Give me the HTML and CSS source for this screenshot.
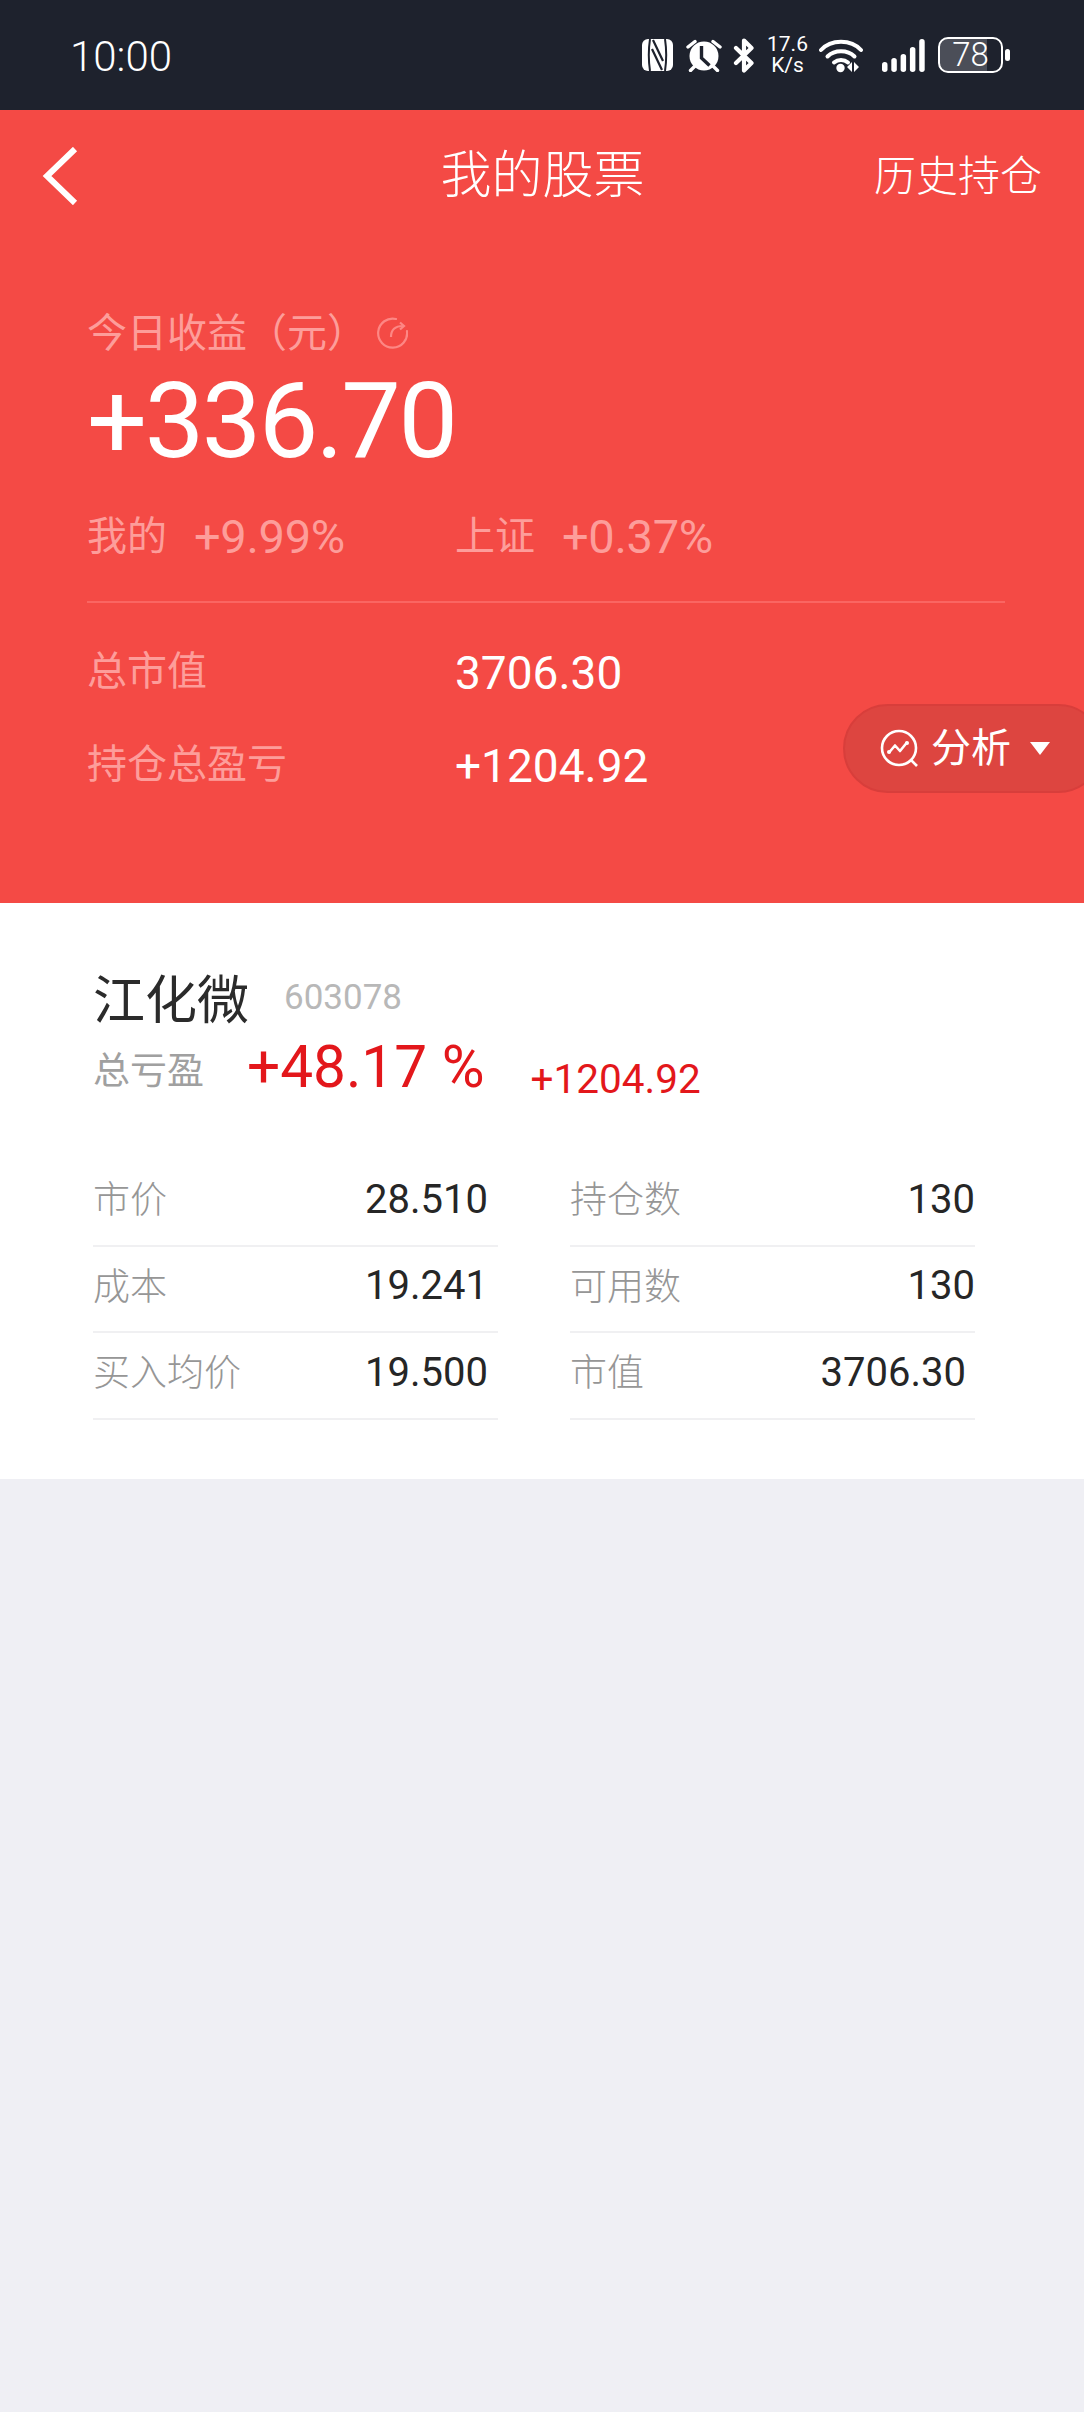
FILE: index.html
```html
<!DOCTYPE html>
<html lang="zh-CN">
<head>
<meta charset="utf-8">
<title>我的股票</title>
<link rel="stylesheet" href="styles.css">
</head>
<body>
<div class="page">
  <div class="status">
    <span class="time">10:00</span>
    <div class="status-icons">
      <svg class="ic-nfc" width="31" height="32" viewBox="0 0 31 32"><rect width="31" height="32" rx="6" fill="#fff"/><path d="M8 0c-1.500 10-1.500 22 0 32M23 0c1.500 10 1.500 22 0 32" stroke="#1e222d" stroke-width="2" fill="none"/><path d="M11 1 21 22M10 10l10 21" stroke="#1e222d" stroke-width="2.200" fill="none"/></svg>
      <svg class="ic-alarm" width="36" height="33" viewBox="0 0 36 33"><circle cx="18" cy="17" r="14.500" fill="#fff"/><path d="M15.500 7v12l8 7.500" stroke="#1e222d" stroke-width="3.400" fill="none"/><path d="M2 8 9 2.500M34 8 27 2.500M4.500 31.500l4-4M31.500 31.500l-4-4" stroke="#fff" stroke-width="3.400" stroke-linecap="round"/></svg>
      <svg class="ic-bt" width="22" height="35" viewBox="0 0 22 35"><path d="M3 10 18.500 25 11 32.500V2.500L18.500 10 3 25" stroke="#fff" stroke-width="4.200" fill="none" stroke-linejoin="round" stroke-linecap="round"/></svg>
      <div class="speed"><span>17.6</span><span>K/s</span></div>
      <svg class="ic-wifi" width="44" height="35" viewBox="0 0 44 35"><path d="M2 12C12 1 32 1 42 12" stroke="#fff" stroke-width="4" fill="none" stroke-linecap="round"/><path d="M8.500 18.500c7-7 20-7 27 0" stroke="#fff" stroke-width="4" fill="none" stroke-linecap="round"/><path d="M15 24.500c4-3.500 10-3.500 14 0" stroke="#fff" stroke-width="4" fill="none" stroke-linecap="round"/><circle cx="21.500" cy="30" r="4.200" fill="#fff"/><path d="M33 24v10l-5-5zM35 24v10l5-5z" fill="#fff"/></svg>
      <svg class="ic-signal" width="43" height="33" viewBox="0 0 43 33"><rect x="0" y="23" width="5.500" height="10" rx="2.700" fill="#fff"/><rect x="9.300" y="19" width="5.500" height="14" rx="2.700" fill="#fff"/><rect x="18.600" y="15" width="5.500" height="18" rx="2.700" fill="#fff"/><rect x="27.900" y="8" width="5.500" height="25" rx="2.700" fill="#fff"/><rect x="37.200" y="0" width="5.500" height="33" rx="2.700" fill="#fff"/></svg>
      <div class="battery"><div class="battery-body">78</div><span class="battery-tip"></span></div>
    </div>
  </div>
  <section class="red">
    <header class="nav">
      <svg class="back" width="36" height="58" viewBox="0 0 36 58"><path d="M33 2 5 29l28 27" stroke="#fff" stroke-width="6" fill="none"/></svg>
      <h1 class="title">我的股票</h1>
      <span class="history">历史持仓</span>
    </header>
    <div class="hero">
      <div class="today">
        <span class="today-text">今日收益（元）</span>
        <svg class="refresh" width="32" height="32" viewBox="0 0 32 32"><path d="M20 2A14.500 14.500 0 1 0 31 14" stroke="#fd8784" stroke-width="2.200" fill="none" stroke-linecap="round"/><path d="M15 20C15 13 19 9 27 9" stroke="#fd8784" stroke-width="2.200" fill="none"/><path d="M24 5.500 28 9l-4 3.500" stroke="#fd8784" stroke-width="2.200" fill="none"/></svg>
      </div>
      <div class="amount">+336.70</div>
      <div class="compare">
        <div class="cell"><span>我的</span><span class="pct">+9.99%</span></div>
        <div class="cell"><span>上证</span><span class="pct">+0.37%</span></div>
      </div>
      <div class="divider"></div>
      <div class="stat first"><span class="stat-label">总市值</span><span class="stat-value">3706.30</span></div>
      <div class="stat"><span class="stat-label">持仓总盈亏</span><span class="stat-value">+1204.92</span></div>
    </div>
    <div class="pill">
      <svg width="40" height="40" viewBox="0 0 40 40"><circle cx="19" cy="19" r="17" stroke="#fff" stroke-width="2.600" fill="none"/><path d="M9.500 23 15 16.500l5 5.500 6.500-8" stroke="#fff" stroke-width="2.600" fill="none" stroke-linejoin="round" stroke-linecap="round"/><circle cx="9" cy="23" r="2" fill="#fff"/><circle cx="27" cy="14" r="2" fill="#fff"/><path d="M31 31l6 6" stroke="#fff" stroke-width="2.600"/></svg>
      <span class="pill-text">分析</span>
      <i class="caret"></i>
    </div>
  </section>
  <section class="card">
    <div class="stock-head"><span class="name">江化微</span><span class="code">603078</span></div>
    <div class="gain"><span class="gain-label">总亏盈</span><span class="gain-pct">+48.17 %</span><span class="gain-val">+1204.92</span></div>
    <div class="table">
      <div class="row"><span class="k">市价</span><span class="v">28.510</span></div>
      <div class="row"><span class="k">持仓数</span><span class="v">130</span></div>
      <div class="row"><span class="k">成本</span><span class="v">19.241</span></div>
      <div class="row"><span class="k">可用数</span><span class="v">130</span></div>
      <div class="row"><span class="k">买入均价</span><span class="v">19.500</span></div>
      <div class="row"><span class="k">市值</span><span class="v wide">3706.30</span></div>
    </div>
  </section>
</div>
</body>
</html>
```
FILE: styles.css
```css
* { box-sizing: border-box; }
html, body { margin: 0; padding: 0; }
body {
  background: #efeff4;
  font-family: Roboto, "Noto Sans CJK SC", sans-serif;
  font-weight: 300;
}
.page { width: 1084px; height: 2412px; overflow: hidden; }

.status {
  height: 110px;
  background: #1e222d;
  color: #fff;
  display: flex;
  align-items: center;
  justify-content: space-between;
  padding: 0 74px 0 70px;
}
.time { font-size: 42px; line-height: 1; font-weight: 300; padding-top: 4px; }
.status-icons { display: flex; align-items: center; }
.status-icons svg { display: block; flex: none; }
.ic-alarm { margin-left: 13px; }
.ic-bt { margin-left: 11px; }
.speed {
  margin-left: 12px;
  width: 41px;
  display: flex;
  flex-direction: column;
  align-items: center;
  font-size: 21px;
  line-height: 21px;
  font-weight: 400;
}
.ic-wifi { margin-left: 11px; }
.ic-signal { margin-left: 19px; }
.battery { margin-left: 13px; display: flex; align-items: center; gap: 2px; }
.battery-body {
  width: 65px;
  height: 36px;
  border: 2px solid #fff;
  border-radius: 10px;
  background: linear-gradient(90deg, #4b4e58 0 77%, transparent 77%);
  text-align: center;
  font-size: 33px;
  line-height: 32px;
  font-weight: 300;
}
.battery-tip { width: 5px; height: 12px; background: #fff; border-radius: 3px; }

.red { position: relative; height: 793px; background: #f44a45; color: #fff; }
.nav {
  height: 132px;
  display: flex;
  align-items: center;
  justify-content: space-between;
  padding: 0 42px;
  position: relative;
}
.back { display: block; }
.title {
  position: absolute;
  left: 0;
  right: 0;
  margin: 0;
  text-align: center;
  font-size: 51px;
  line-height: 60px;
  font-weight: 300;
  text-indent: 1px;
}
.history { font-size: 42px; line-height: 60px; padding-top: 2px; }

.hero { padding: 66px 79px 0 87px; }
.today {
  display: flex;
  align-items: center;
  height: 50px;
  font-size: 40px;
  color: #fd9d9a;
  font-weight: 400;
}
.today-text { padding-bottom: 6px; }
.refresh { margin-left: 9px; }
.amount {
  margin-top: 13px;
  font-size: 106px;
  line-height: 100px;
  font-weight: 400;
  letter-spacing: -2.500px;
}
.compare { margin-top: 41px; display: grid; grid-template-columns: 368px 1fr; color: #fd9d9a; font-size: 40px; line-height: 50px; font-weight: 400; }
.cell { display: flex; gap: 27px; }
.pct { font-size: 47px; font-weight: 400; letter-spacing: -0.300px; }
.divider { margin-top: 39px; height: 2px; background: #fa6662; }
.stat { display: grid; grid-template-columns: 368px 1fr; margin-top: 43px; height: 50px; line-height: 50px; }
.stat.first { margin-top: 44px; }
.stat-label { font-size: 40px; color: #fd9d9a; font-weight: 400; }
.stat-value { font-size: 46px; font-weight: 400; line-height: 52px; }

.pill {
  position: absolute;
  left: 843px;
  top: 594px;
  width: 260px;
  height: 89px;
  border: 2px solid #d83e3b;
  border-radius: 45px;
  background: #dd4540;
  display: flex;
  align-items: center;
  padding-left: 35px;
  font-size: 40px;
  font-weight: 400;
}
.pill svg { display: block; }
.pill-text { margin-left: 11px; padding-bottom: 8px; }
.caret {
  margin-left: 19px;
  width: 0;
  height: 0;
  border-left: 10px solid transparent;
  border-right: 10px solid transparent;
  border-top: 13px solid #fff;
}

.card { background: #fff; height: 576px; padding: 63px 0 0 93px; }
.stock-head { display: flex; align-items: center; height: 60px; }
.name { font-size: 52px; font-weight: 400; color: #2b2b2b; }
.code { margin-left: 35px; font-size: 35px; color: #b8b8b8; font-weight: 400; padding-top: 2px; }
.gain { display: flex; align-items: flex-start; margin-top: 11px; color: #e3171b; font-weight: 400; line-height: 60px; }
.gain-label { font-size: 37px; color: #a0a0a0; margin-top: 5px; }
.gain-pct { margin-left: 43px; font-size: 58.500px; }
.gain-val { margin-left: 46px; font-size: 40.500px; margin-top: 12px; }
.table {
  margin-top: 51px;
  display: grid;
  grid-template-columns: 405px 405px;
  column-gap: 72px;
  grid-auto-rows: 86.500px;
}
.row {
  display: flex;
  align-items: center;
  justify-content: space-between;
  border-bottom: 2px solid #f0f0f2;
  padding: 0 10px 6px 0;
}
.row:nth-child(even) { padding-right: 0; }
.k { font-size: 37px; color: #969696; padding-bottom: 4px; }
.v { font-size: 40px; color: #262626; font-weight: 400; }
.v.wide { margin-right: 9px; }
```
